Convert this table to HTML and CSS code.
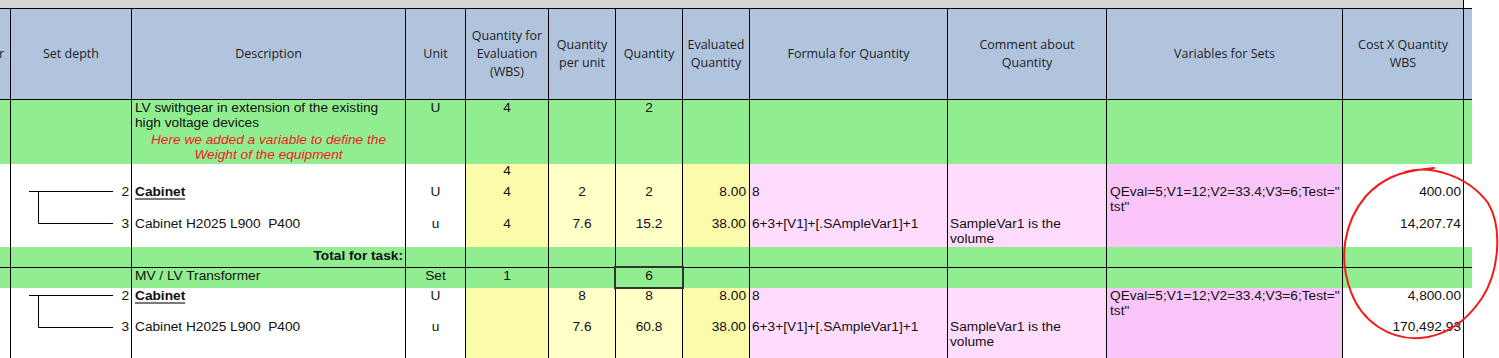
FILE: index.html
```html
<!DOCTYPE html>
<html>
<head>
<meta charset="utf-8">
<link rel="stylesheet" href="styles.css">
</head>
<body>
<div class="sheet">
  <div class="topbar"></div>

  <div class="row head">
    <div class="c0"><span>r</span></div>
    <div>Set depth</div>
    <div>Description</div>
    <div>Unit</div>
    <div>Quantity for<br>Evaluation<br>(WBS)</div>
    <div>Quantity<br>per unit</div>
    <div>Quantity</div>
    <div>Evaluated<br>Quantity</div>
    <div>Formula for Quantity</div>
    <div>Comment about<br>Quantity</div>
    <div>Variables for Sets</div>
    <div>Cost X Quantity<br>WBS</div>
    <div></div>
  </div>

  <div class="row green ra">
    <div></div>
    <div class="d"></div>
    <div class="ds">
      <div>LV swithgear in extension of the existing<br>high voltage devices</div>
      <div class="note">Here we added a variable to define the<br>Weight of the equipment</div>
    </div>
    <div class="u">U</div>
    <div class="qe">4</div>
    <div class="qpu"></div>
    <div class="q">2</div>
    <div class="ev"></div>
    <div class="f"></div>
    <div class="cm"></div>
    <div class="v"></div>
    <div class="cost"></div>
    <div></div>
  </div>

  <div class="row w rb1">
    <div></div>
    <div class="d"></div>
    <div class="ds"></div>
    <div class="u"></div>
    <div class="qe">4</div>
    <div class="qpu"></div>
    <div class="q"></div>
    <div class="ev"></div>
    <div class="f"></div>
    <div class="cm"></div>
    <div class="v"></div>
    <div class="cost"></div>
    <div></div>
  </div>

  <div class="row w rb2">
    <div></div>
    <div class="d">
      <svg class="tree" width="103" height="38" viewBox="0 0 103 38"><path d="M18 14.5H102M27.5 14.5V38" stroke="#000" stroke-width="1" fill="none"/></svg>
      <span class="lvl">2</span>
    </div>
    <div class="ds"><span class="link">Cabinet</span></div>
    <div class="u">U</div>
    <div class="qe">4</div>
    <div class="qpu">2</div>
    <div class="q">2</div>
    <div class="ev">8.00</div>
    <div class="f">8</div>
    <div class="cm"></div>
    <div class="v">QEval=5;V1=12;V2=33.4;V3=6;Test="<br>tst"</div>
    <div class="cost">400.00</div>
    <div></div>
  </div>

  <div class="row w rb3">
    <div></div>
    <div class="d">
      <svg class="tree" width="103" height="32" viewBox="0 0 103 32"><path d="M27.5 0V8.5H102" stroke="#000" stroke-width="1" fill="none"/></svg>
      <span class="lvl">3</span>
    </div>
    <div class="ds pre">Cabinet H2025 L900  P400</div>
    <div class="u">u</div>
    <div class="qe">4</div>
    <div class="qpu">7.6</div>
    <div class="q">15.2</div>
    <div class="ev">38.00</div>
    <div class="f">6+3+[V1]+[.SAmpleVar1]+1</div>
    <div class="cm">SampleVar1 is the<br>volume</div>
    <div class="v"></div>
    <div class="cost">14,207.74</div>
    <div></div>
  </div>

  <div class="row green rt">
    <div></div>
    <div class="d"></div>
    <div class="ds total">Total for task:</div>
    <div class="u"></div>
    <div class="qe"></div>
    <div class="qpu"></div>
    <div class="q"></div>
    <div class="ev"></div>
    <div class="f"></div>
    <div class="cm"></div>
    <div class="v"></div>
    <div class="cost"></div>
    <div></div>
  </div>

  <div class="row green rm">
    <div></div>
    <div class="d"></div>
    <div class="ds">MV / LV Transformer</div>
    <div class="u">Set</div>
    <div class="qe">1</div>
    <div class="qpu"></div>
    <div class="q sel">6</div>
    <div class="ev"></div>
    <div class="f"></div>
    <div class="cm"></div>
    <div class="v"></div>
    <div class="cost"></div>
    <div></div>
  </div>

  <div class="row w rc1">
    <div></div>
    <div class="d">
      <svg class="tree" width="103" height="31" viewBox="0 0 103 31"><path d="M18 7.5H102M27.5 7.5V31" stroke="#000" stroke-width="1" fill="none"/></svg>
      <span class="lvl">2</span>
    </div>
    <div class="ds"><span class="link">Cabinet</span></div>
    <div class="u">U</div>
    <div class="qe"></div>
    <div class="qpu">8</div>
    <div class="q">8</div>
    <div class="ev">8.00</div>
    <div class="f">8</div>
    <div class="cm"></div>
    <div class="v">QEval=5;V1=12;V2=33.4;V3=6;Test="<br>tst"</div>
    <div class="cost">4,800.00</div>
    <div></div>
  </div>

  <div class="row w rc2">
    <div></div>
    <div class="d">
      <svg class="tree" width="103" height="39" viewBox="0 0 103 39"><path d="M27.5 0V8.5H102" stroke="#000" stroke-width="1" fill="none"/></svg>
      <span class="lvl">3</span>
    </div>
    <div class="ds pre">Cabinet H2025 L900  P400</div>
    <div class="u">u</div>
    <div class="qe"></div>
    <div class="qpu">7.6</div>
    <div class="q">60.8</div>
    <div class="ev">38.00</div>
    <div class="f">6+3+[V1]+[.SAmpleVar1]+1</div>
    <div class="cm">SampleVar1 is the<br>volume</div>
    <div class="v"></div>
    <div class="cost">170,492.93</div>
    <div></div>
  </div>

  <svg class="annot" width="1499" height="358" viewBox="0 0 1499 358">
    <path d="M1405 172 C1430 164 1468 176 1488 203 C1503 228 1499 272 1482 298 C1466 322 1446 336 1420 338 C1390 340 1362 322 1351 292 C1338 258 1344 222 1366 196 C1382 179 1398 171 1434 168" stroke="#f21a1a" stroke-width="2" fill="none" stroke-linecap="round"/>
  </svg>
</div>
</body>
</html>
```

FILE: styles.css
```css
html, body {
  margin: 0;
  padding: 0;
  overflow: hidden;
  background: #ffffff;
}

body {
  font-family: "Liberation Sans", Arial, sans-serif;
  font-size: 13.7px;
  line-height: 15px;
  color: #111111;
}

.sheet {
  position: relative;
  width: 1472px;
}

.topbar {
  width: 1463px;
  height: 8px;
  background: #d4d4d4;
  border-right: 1px solid #000;
}

.row {
  display: grid;
  grid-template-columns: 10px 121px 274px 60px 83px 67px 67px 67px 198px 159px 236px 121px 9px;
  box-sizing: border-box;
}

.row > div {
  box-sizing: border-box;
  border-left: 1px solid #000;
  min-width: 0;
}

.row > div:first-child {
  border-left: none;
}

/* header */
.head {
  height: 92px;
  border-top: 1px solid #000;
  border-bottom: 1px solid #000;
  background: #b0c4de;
  font-family: "Open Sans", "Noto Sans", sans-serif;
  font-size: 12.5px;
  line-height: 18px;
  color: #1e1e1e;
}

.head > div {
  display: flex;
  align-items: center;
  justify-content: center;
  text-align: center;
}

.head > div.c0 {
  justify-content: flex-end;
  overflow: hidden;
  padding-right: 6px;
}

/* row kinds */
.green {
  background: #90ee90;
}

.w {
  background: #ffffff;
}

.w .qe,
.w .ev {
  background: #fbfbaa;
}

.w .qpu,
.w .q {
  background: #ffffc8;
}

.w .f,
.w .cm {
  background: #ffdcfe;
}

.w .v {
  background: #fac6fa;
}

/* cell alignment */
.u,
.qe,
.qpu,
.q {
  text-align: center;
}

.ev {
  text-align: right;
  padding-right: 3px;
}

.cost {
  text-align: right;
  padding-right: 2px;
}

.ds {
  padding-left: 3px;
}

.f,
.cm {
  padding-left: 2px;
}

.v {
  padding-left: 3px;
  white-space: nowrap;
}

.pre {
  white-space: pre;
}

.note {
  color: #f21b1b;
  font-style: italic;
  text-align: center;
  margin-top: 2px;
  padding-right: 3px;
}

.link {
  font-weight: bold;
  text-decoration: underline;
  text-decoration-color: #7a7a7a;
  text-decoration-thickness: 2px;
  text-underline-offset: 2px;
}

.total {
  font-weight: bold;
  text-align: right;
  padding-right: 2px;
  padding-left: 0;
}

/* depth column with tree connectors */
.row > div.d {
  display: flex;
  align-items: flex-start;
  padding: 0 2px 0 0;
}

.tree {
  display: block;
  flex: none;
}

.lvl {
  margin-left: auto;
}

/* row heights */
.ra {
  height: 64px;
}

.rb1 {
  height: 13px;
  line-height: 13px;
}

.rb2 {
  height: 38px;
}

.rb2 > div {
  padding-top: 7px;
}

.rb2 .lvl {
  margin-top: 7px;
}

.rb3 {
  height: 32px;
}

.rb3 > div {
  padding-top: 1px;
}

.rb3 .lvl {
  margin-top: 1px;
}

.rt {
  height: 20px;
}

.rt > div {
  padding-top: 1px;
}

.rm {
  height: 21px;
  border-top: 1px solid #000;
}

.rc1 {
  height: 31px;
}

.rc2 {
  height: 39px;
}

/* selected cell */
.sel {
  position: relative;
}

.sel::after {
  content: "";
  position: absolute;
  left: -2px;
  top: -2px;
  right: -2px;
  bottom: -1px;
  border: 2px solid #2b382b;
  z-index: 3;
}

/* hand-drawn annotation */
.annot {
  position: absolute;
  left: 0;
  top: 0;
  pointer-events: none;
  z-index: 5;
}
```
